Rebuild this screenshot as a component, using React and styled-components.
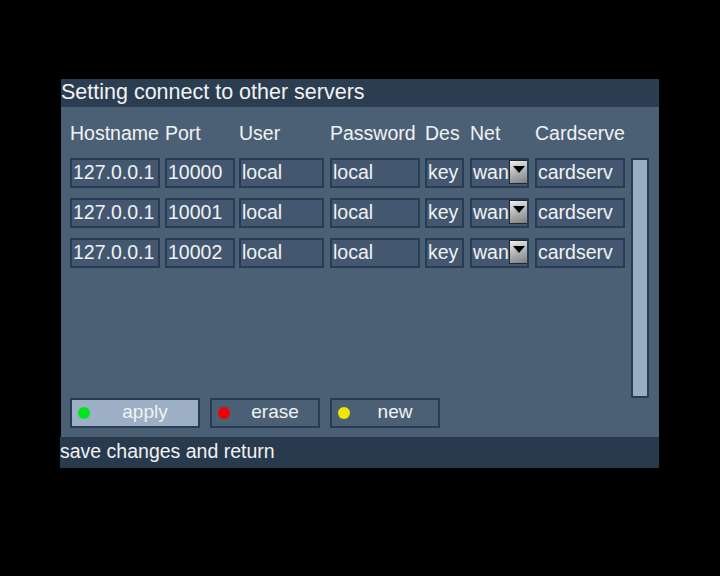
import React from "react";
import styled, { createGlobalStyle } from "styled-components";

const GlobalStyle = createGlobalStyle`
  html, body {
    margin: 0;
    padding: 0;
    background: #000;
  }
  body {
    font-family: "Liberation Sans", Arial, sans-serif;
    color: #f2f2f2;
  }
`;

const servers = [
  { host: "127.0.0.1", port: "10000", user: "local", pass: "local", des: "key", net: "wan", card: "cardserv" },
  { host: "127.0.0.1", port: "10001", user: "local", pass: "local", des: "key", net: "wan", card: "cardserv" },
  { host: "127.0.0.1", port: "10002", user: "local", pass: "local", des: "key", net: "wan", card: "cardserv" },
];

const columns = "95px 74px 91px 95px 45px 65px 90px";

const Screen = styled.div`
  width: 720px;
  height: 576px;
  padding: 79px 0 0 60px;
  box-sizing: border-box;
`;

const Window = styled.div`
  width: 599px;
  display: flex;
  flex-direction: column;
`;

const TitleBar = styled.div`
  margin-left: 1px;
  height: 28px;
  line-height: 27px;
  background: #2b3d51;
  font-size: 21.5px;
  white-space: nowrap;
  overflow: hidden;
`;

const Body = styled.div`
  margin-left: 1px;
  height: 330px;
  background: #4b6075;
  padding-left: 9px;
  box-sizing: border-box;
  display: flex;
  flex-direction: column;
`;

const HeaderRow = styled.div`
  display: grid;
  grid-template-columns: ${columns};
  height: 51px;
  align-items: center;
  font-size: 19.5px;
  white-space: nowrap;
  padding-top: 1px;
  box-sizing: border-box;
`;

const ListArea = styled.div`
  display: flex;
  height: 240px;
`;

const Rows = styled.div`
  display: flex;
  flex-direction: column;
  gap: 10px;
  width: 556px;
`;

const Row = styled.div`
  display: grid;
  grid-template-columns: ${columns};
`;

const Field = styled.div`
  width: ${(p) => p.$w}px;
  height: 30px;
  box-sizing: border-box;
  border: 2px solid #283c53;
  background: #435870;
  font-size: 19.5px;
  line-height: 24px;
  padding: 0 0 3px 1px;
  white-space: nowrap;
  overflow: hidden;
  display: flex;
  align-items: center;
  justify-content: space-between;
`;

const ArrowButton = styled.div`
  width: 20px;
  height: 24px;
  box-sizing: border-box;
  border: 1px solid #1e2a36;
  background: linear-gradient(160deg, #eeeeee 0%, #b8b8b8 45%, #7c7c7c 100%);
  display: flex;
  justify-content: center;
  padding-top: 5px;
  margin-top: 1px;
  flex-shrink: 0;
`;

const ScrollBar = styled.div`
  width: 18px;
  height: 240px;
  margin-left: 5px;
  box-sizing: border-box;
  border: 2px solid #283c53;
  background: #9aacc2;
`;

const ButtonRow = styled.div`
  display: flex;
  gap: 10px;
`;

const Button = styled.div`
  width: ${(p) => p.$w}px;
  height: 30px;
  box-sizing: border-box;
  border: 2px solid #283c53;
  background: ${(p) => (p.$active ? "#9cafc5" : "#4b6075")};
  display: flex;
  align-items: center;
  font-size: 19px;
  padding-left: 6px;
`;

const Dot = styled.span`
  width: 12px;
  height: 12px;
  border-radius: 50%;
  background: ${(p) => p.$color};
  flex-shrink: 0;
`;

const ButtonLabel = styled.span`
  flex: 1;
  text-align: center;
  padding: 0 0 3px 2px;
`;

const Footer = styled.div`
  height: 31px;
  line-height: 29px;
  background: #283a4e;
  font-size: 19.5px;
  white-space: nowrap;
`;

const DownArrow = () => (
  <svg width="12" height="8" viewBox="0 0 12 8">
    <polygon points="0,0 12,0 6,7" fill="#000" />
  </svg>
);

export default function App() {
  return (
    <>
      <GlobalStyle />
      <Screen>
        <Window>
          <TitleBar>Setting connect to other servers</TitleBar>
          <Body>
            <HeaderRow>
              <span>Hostname</span>
              <span>Port</span>
              <span>User</span>
              <span>Password</span>
              <span>Des</span>
              <span>Net</span>
              <span>Cardserve</span>
            </HeaderRow>
            <ListArea>
              <Rows>
                {servers.map((s) => (
                  <Row key={s.port}>
                    <Field $w={90}>{s.host}</Field>
                    <Field $w={70}>{s.port}</Field>
                    <Field $w={85}>{s.user}</Field>
                    <Field $w={90}>{s.pass}</Field>
                    <Field $w={39}>{s.des}</Field>
                    <Field $w={59}>
                      {s.net}
                      <ArrowButton>
                        <DownArrow />
                      </ArrowButton>
                    </Field>
                    <Field $w={90}>{s.card}</Field>
                  </Row>
                ))}
              </Rows>
              <ScrollBar />
            </ListArea>
            <ButtonRow>
              <Button $w={130} $active>
                <Dot $color="#00e61e" />
                <ButtonLabel>apply</ButtonLabel>
              </Button>
              <Button $w={110}>
                <Dot $color="#f00000" />
                <ButtonLabel>erase</ButtonLabel>
              </Button>
              <Button $w={110}>
                <Dot $color="#f0e600" />
                <ButtonLabel>new</ButtonLabel>
              </Button>
            </ButtonRow>
          </Body>
          <Footer>save changes and return</Footer>
        </Window>
      </Screen>
    </>
  );
}
